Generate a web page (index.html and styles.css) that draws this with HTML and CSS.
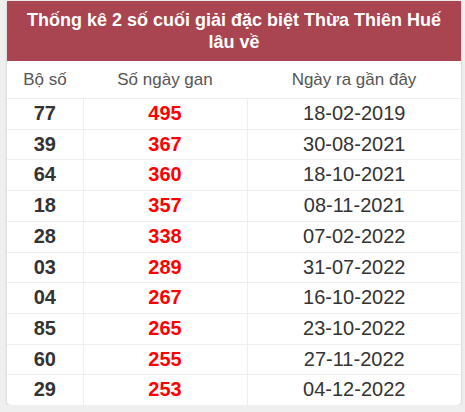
FILE: index.html
```html
<!DOCTYPE html>
<html lang="vi">
<head>
<meta charset="utf-8">
<title>Thống kê</title>
<link rel="stylesheet" href="styles.css">
</head>
<body>
<div class="card">
  <div class="title">Thống kê 2 số cuối giải đặc biệt Thừa Thiên Huế lâu về</div>
  <table class="stats">
    <thead>
      <tr><th class="c1">Bộ số</th><th class="c2">Số ngày gan</th><th class="c3">Ngày ra gần đây</th></tr>
    </thead>
    <tbody>
      <tr><td class="num">77</td><td class="gan">495</td><td class="date">18-02-2019</td></tr>
      <tr><td class="num">39</td><td class="gan">367</td><td class="date">30-08-2021</td></tr>
      <tr><td class="num">64</td><td class="gan">360</td><td class="date">18-10-2021</td></tr>
      <tr><td class="num">18</td><td class="gan">357</td><td class="date">08-11-2021</td></tr>
      <tr><td class="num">28</td><td class="gan">338</td><td class="date">07-02-2022</td></tr>
      <tr><td class="num">03</td><td class="gan">289</td><td class="date">31-07-2022</td></tr>
      <tr><td class="num">04</td><td class="gan">267</td><td class="date">16-10-2022</td></tr>
      <tr><td class="num">85</td><td class="gan">265</td><td class="date">23-10-2022</td></tr>
      <tr><td class="num">60</td><td class="gan">255</td><td class="date">27-11-2022</td></tr>
      <tr><td class="num">29</td><td class="gan">253</td><td class="date">04-12-2022</td></tr>
    </tbody>
  </table>
</div>
</body>
</html>
```
FILE: styles.css
```css
html, body {
  margin: 0;
  padding: 0;
  background: #efefef;
}
body {
  padding: 1px 4px 0 7px;
  font-family: "Liberation Sans", Arial, sans-serif;
}
.card {
  width: 454px;
  background: #fff;
  border-radius: 0 0 4px 4px;
  box-shadow: 0 1px 3px rgba(0,0,0,0.18);
  overflow: hidden;
}
.title {
  background: #a94451;
  color: #fff;
  font-weight: bold;
  font-size: 18px;
  line-height: 22px;
  text-align: center;
  padding: 8px 10px 8px;
  height: 44px;
}
.stats {
  width: 100%;
  border-collapse: collapse;
  table-layout: fixed;
}
.stats th {
  font-weight: normal;
  color: #555;
  font-size: 17px;
  height: 37px;
  padding: 0;
  vertical-align: middle;
}
.c1 { width: 76px; }
.c2 { width: 164px; }
.stats td {
  border-top: 1px solid #eee;
  text-align: center;
  font-size: 20px;
  line-height: 21.7px;
  padding: 4px 0;
  color: #333;
}
.stats td + td {
  border-left: 1px solid #eee;
}
.num { font-weight: bold; }
.gan { font-weight: bold; color: #f00 !important; }
.date { font-weight: normal; }
```
